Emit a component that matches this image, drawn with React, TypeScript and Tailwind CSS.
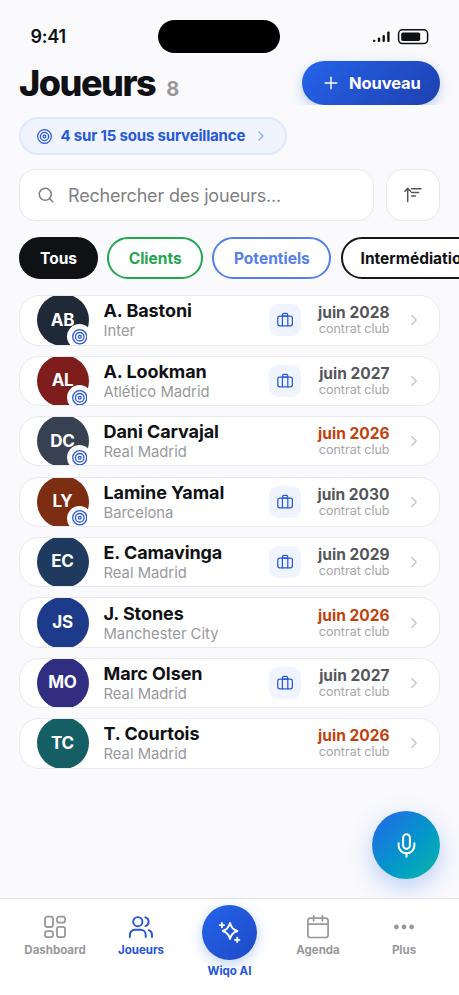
import React from 'react';
import { Plus, ChevronRight, Search, Mic, Ellipsis } from 'lucide-react';

type Player = {
    initials: string;
    name: string;
    club: string;
    date: string;
    color: string;
    watched?: boolean;
    mandate?: boolean;
    expiring?: boolean;
};

const PLAYERS: Player[] = [
    { initials: 'AB', name: 'A. Bastoni', club: 'Inter', date: 'juin 2028', color: 'bg-[#1f2937]', watched: true, mandate: true },
    { initials: 'AL', name: 'A. Lookman', club: 'Atlético Madrid', date: 'juin 2027', color: 'bg-[#7f1d1d]', watched: true, mandate: true },
    { initials: 'DC', name: 'Dani Carvajal', club: 'Real Madrid', date: 'juin 2026', color: 'bg-[#374151]', watched: true, expiring: true },
    { initials: 'LY', name: 'Lamine Yamal', club: 'Barcelona', date: 'juin 2030', color: 'bg-[#7c2d12]', watched: true, mandate: true },
    { initials: 'EC', name: 'E. Camavinga', club: 'Real Madrid', date: 'juin 2029', color: 'bg-[#1e3a5f]', mandate: true },
    { initials: 'JS', name: 'J. Stones', club: 'Manchester City', date: 'juin 2026', color: 'bg-[#1e3a8a]', expiring: true },
    { initials: 'MO', name: 'Marc Olsen', club: 'Real Madrid', date: 'juin 2027', color: 'bg-[#312e81]', mandate: true },
    { initials: 'TC', name: 'T. Courtois', club: 'Real Madrid', date: 'juin 2026', color: 'bg-[#155e63]', expiring: true },
];

const FILTERS = [
    { label: 'Tous', style: 'w-[79px] border-[#0f1115] bg-[#0f1115] text-white justify-center' },
    { label: 'Clients', style: 'w-[96px] border-[#22a750] bg-white text-[#22a750] justify-center' },
    { label: 'Potentiels', style: 'w-[119px] border-[#5580ea] bg-white text-[#5580ea] justify-center' },
    { label: 'Intermédiation', style: 'w-[160px] border-[#18181b] bg-white text-[#0f1115] pl-[18px]' },
];

const WatchIcon: React.FC<{ className?: string }> = ({ className }) => (
    <svg viewBox="0 0 24 24" fill="none" stroke="currentColor" strokeWidth="2" className={className}>
        <circle cx="12" cy="12" r="10.9" />
        <circle cx="12" cy="12" r="6.6" />
        <circle cx="12" cy="12" r="2.2" />
    </svg>
);

const SuitcaseIcon = () => (
    <svg viewBox="0 0 18 16" fill="none" stroke="currentColor" strokeWidth="1.25" strokeLinecap="round" strokeLinejoin="round" className="h-4 w-[18px]">
        <rect x="1.8" y="4" width="14.6" height="9.8" rx="2" />
        <path d="M6.4 13.8V3.2a1.8 1.8 0 0 1 1.8-1.8H10a1.8 1.8 0 0 1 1.8 1.8v10.6" />
        <path d="M6.4 4h5.4" />
    </svg>
);

const SortIcon = () => (
    <svg viewBox="0 0 20 18" fill="none" stroke="currentColor" strokeWidth="1.5" strokeLinecap="round" strokeLinejoin="round" className="h-[18px] w-5">
        <path d="M4.7 15.6V2.8M1.9 5.2l2.8-2.8 2.8 2.8" />
        <path d="M8.5 2.8h9.6M8.5 6.4h7M8.5 10h4" />
    </svg>
);

const DashboardIcon = () => (
    <svg viewBox="0 0 24 24" fill="none" stroke="currentColor" strokeWidth="1.8" className="size-6">
        <rect x="2" y="1.7" width="8" height="10.3" rx="2.2" />
        <rect x="14" y="1.7" width="8" height="6" rx="2.2" />
        <rect x="14" y="11.8" width="8" height="10.3" rx="2.2" />
        <rect x="2" y="16.2" width="8" height="6" rx="2.2" />
    </svg>
);

const PeopleIcon = () => (
    <svg viewBox="0 0 24 24" fill="none" stroke="currentColor" strokeWidth="1.9" strokeLinecap="round" strokeLinejoin="round" className="size-6">
        <circle cx="8.8" cy="6.7" r="4.6" />
        <path d="M.9 22v-2.2a5 5 0 0 1 5-5h5.8a5 5 0 0 1 5 5V22" />
        <path d="M16.4 2.3a4.6 4.6 0 0 1 0 8.8M19.8 15.2a5 5 0 0 1 3.2 4.6V22" />
    </svg>
);

const AgendaIcon = () => (
    <svg viewBox="0 0 24 26" fill="none" stroke="currentColor" strokeWidth="1.7" strokeLinecap="round" className="h-[26px] w-6">
        <rect x="1.9" y="4.1" width="20.2" height="19.4" rx="2.6" />
        <path d="M1.9 10.2h20.2M7.6 1.8v5M16.4 1.8v5" />
    </svg>
);

const SparkleIcon = () => (
    <svg viewBox="0 0 24 24" fill="none" stroke="currentColor" strokeWidth="1.9" strokeLinecap="round" strokeLinejoin="round" className="mb-[3px] size-6">
        <path d="M12 4Q13.6 10.4 19.4 12Q13.6 13.6 12 20Q10.4 13.6 4.6 12Q10.4 10.4 12 4z" />
        <path d="M3.9 3.9v4.4M1.7 6.1h4.4M19.2 18.7v4.4M17 20.9h4.4" />
    </svg>
);

const StatusBar = () => (
    <div className="flex h-[61px] items-start pt-5">
        <div className="w-[157.5px] pl-[30.5px] text-[18px] leading-[34px] font-semibold tracking-[-0.2px] text-[#0f1115]">9:41</div>
        <div className="h-[33px] w-[122.5px] rounded-full bg-black" />
        <svg viewBox="0 0 56 16" className="mt-[9px] ml-[93px] h-4 w-14" fill="#0f1115">
            <rect x="0" y="10.7" width="2.4" height="2.4" rx="1" />
            <rect x="4.8" y="8.6" width="2.4" height="4.5" rx="1" />
            <rect x="9.5" y="6" width="2.4" height="7.1" rx="1" />
            <rect x="14.2" y="2.4" width="2.4" height="10.7" rx="1" />
            <rect x="25.6" y="0.8" width="29" height="13.7" rx="3.8" fill="none" stroke="#0f1115" strokeWidth="1.5" />
            <rect x="28.2" y="3.4" width="19" height="8.6" rx="1.8" />
        </svg>
    </div>
);

const PlayerRow: React.FC<{ player: Player }> = ({ player }) => (
    <div className="flex h-[50.4px] shrink-0 items-center overflow-hidden rounded-[20px] border border-[#e9eaee] bg-white pl-[16.5px]">
        <div className={`relative flex size-[52px] shrink-0 items-center justify-center rounded-full text-[17px] font-bold tracking-[-0.3px] text-white ${player.color}`}>
            {player.initials}
            {player.watched && (
                <span className="absolute -right-[3.5px] -bottom-[3px] flex size-[25px] items-center justify-center rounded-full bg-white">
                    <WatchIcon className="size-[15.5px] text-[#2858d8]" />
                </span>
            )}
        </div>
        <div className="ml-[15px] flex-1">
            <p className="text-[18px] leading-[22px] font-bold tracking-[-0.08px] text-[#0f1115]">{player.name}</p>
            <p className="text-[14.8px] leading-[18px] text-[#98989c]">{player.club}</p>
        </div>
        {player.mandate && (
            <div className="flex size-8 items-center justify-center rounded-[9px] bg-[#eff4ff] text-[#2858d8]">
                <SuitcaseIcon />
            </div>
        )}
        <div className="w-[88.5px] text-right">
            <p className={`text-[15.5px] leading-[18px] font-bold ${player.expiring ? 'text-[#c2410c]' : 'text-[#55565a]'}`}>{player.date}</p>
            <p className="text-[12.5px] leading-[14px] text-[#a5a5a9]">contrat club</p>
        </div>
        <ChevronRight className="mr-[16.5px] ml-[15px] text-[#c4c4c8]" size={18} strokeWidth={1.7} />
    </div>
);

const NavItem: React.FC<{ label: string; active?: boolean; children: React.ReactNode }> = ({ label, active, children }) => (
    <div className={`flex w-[86px] flex-col items-center pt-[13.5px] ${active ? 'text-[#2453d6]' : 'text-[#98989c]'}`}>
        <div className="flex h-7 items-center">{children}</div>
        <span className="text-[11.5px] leading-[19px] font-bold">{label}</span>
    </div>
);

export default function App() {
    return (
        <div className="flex h-[995px] w-[459px] flex-col overflow-hidden bg-[#fafafc] font-['Inter',sans-serif]">
            <StatusBar />

            {/* the header clips the button's shadow at its bottom edge */}
            <header className="flex h-11 shrink-0 items-center justify-between px-[19px] [clip-path:inset(-12px_0_0_0)]">
                <div className="flex items-baseline">
                    <h1 className="text-[36px] leading-[46px] font-extrabold tracking-[-1.5px] text-[#0f1115]">Joueurs</h1>
                    <span className="ml-[11px] text-[20px] font-bold text-[#98989c]">8</span>
                </div>
                <button className="flex h-11 w-[138px] items-center rounded-full bg-linear-135 from-[#2563eb] to-[#1e40af] pl-[19px] text-[16.5px] font-bold tracking-[-0.1px] text-white shadow-[0_4px_12px_rgba(37,99,235,0.3)]">
                    <Plus size={20} strokeWidth={1.7} className="mr-2" />
                    Nouveau
                </button>
            </header>

            <div className="mt-3 flex shrink-0 px-[19px]">
                <div className="flex h-[38px] w-[267.5px] items-center rounded-full border-2 border-[#dfe7fc] bg-[#eff4ff] pl-[15.5px] text-[15px] font-bold tracking-[-0.18px] whitespace-nowrap text-[#2858d8]">
                    <WatchIcon className="mr-[9px] size-[15px] shrink-0" />
                    4 sur 15 sous surveillance
                    <ChevronRight size={16} strokeWidth={1.8} className="ml-[8px] shrink-0 text-[#8aa8f0]" />
                </div>
            </div>

            <div className="mt-[14px] flex h-[52px] shrink-0 gap-3 px-[19px]">
                <div className="flex w-[355px] items-center rounded-2xl border-[1.5px] border-[#e6e7eb] bg-white pl-[17px] text-[18px] tracking-[-0.19px] text-[#7f7f83]">
                    <Search size={18} strokeWidth={2} className="mr-[13px]" />
                    Rechercher des joueurs...
                </div>
                <button className="flex flex-1 items-center justify-center rounded-2xl border-[1.5px] border-[#e6e7eb] bg-white text-[#55565a]">
                    <SortIcon />
                </button>
            </div>

            <div className="mt-4 flex h-[42px] shrink-0 gap-[9.2px] overflow-hidden pl-[19px]">
                {FILTERS.map(filter => (
                    <button key={filter.label} className={`flex shrink-0 items-center rounded-full border-2 pt-px text-[15.5px] font-bold ${filter.style}`}>
                        {filter.label}
                    </button>
                ))}
            </div>

            <div className="mt-[16.2px] flex shrink-0 flex-col gap-[10.05px] px-[19px]">
                {PLAYERS.map(player => (
                    <PlayerRow key={player.initials} player={player} />
                ))}
            </div>

            <button className="mt-auto mr-[19px] mb-[19px] flex size-[68px] shrink-0 items-center justify-center self-end rounded-full bg-linear-135 from-[#2563eb] to-[#14b8a6] text-white shadow-[0_8px_24px_rgba(37,99,235,0.3)]">
                <Mic size={27} strokeWidth={1.8} />
            </button>

            <nav className="flex h-[97px] shrink-0 justify-center border-t border-[#e4e5e9] bg-white">
                <NavItem label="Dashboard"><DashboardIcon /></NavItem>
                <NavItem label="Joueurs" active><PeopleIcon /></NavItem>
                <div className="flex w-[91px] flex-col items-center pt-[6px] text-[#2453d6]">
                    <div className="flex size-[55px] items-center justify-center rounded-full bg-linear-135 from-[#2563eb] to-[#1d4ac4] text-white shadow-[0_4px_14px_rgba(37,99,235,0.3)]">
                        <SparkleIcon />
                    </div>
                    <span className="mt-[2px] text-[11.5px] leading-[18px] font-bold">Wiqo AI</span>
                </div>
                <NavItem label="Agenda"><AgendaIcon /></NavItem>
                <NavItem label="Plus"><Ellipsis size={26} strokeWidth={2.4} /></NavItem>
            </nav>
        </div>
    );
}
